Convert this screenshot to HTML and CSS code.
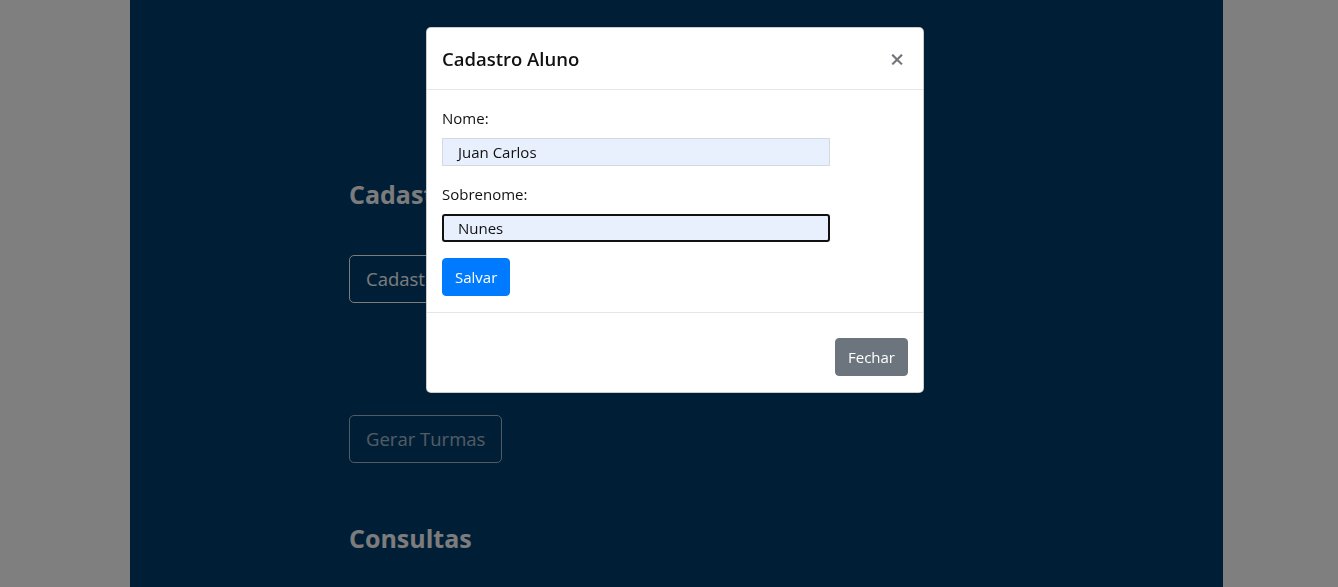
FILE: index.html
```html
<!DOCTYPE html>
<html lang="pt">
<head>
<meta charset="utf-8">
<title>Cadastro Aluno</title>
<link rel="stylesheet" href="styles.css">
</head>
<body>
<div class="page">
  <main class="column">
    <h2 class="section-title first">Cadastros</h2>
    <button class="btn-outline">Cadastrar Aluno</button>
    <button class="btn-outline disabled" disabled>Gerar Turmas</button>
    <h2 class="section-title">Consultas</h2>
  </main>
</div>

<div class="backdrop"></div>

<div class="modal">
  <div class="modal-dialog">
    <div class="modal-header">
      <h5 class="modal-title">Cadastro Aluno</h5>
      <span class="close">&times;</span>
    </div>
    <div class="modal-body">
      <label class="field-label">Nome:</label>
      <div class="input">Juan Carlos</div>
      <label class="field-label">Sobrenome:</label>
      <div class="input focused">Nunes</div>
      <button class="btn btn-primary">Salvar</button>
    </div>
    <div class="modal-footer">
      <button class="btn btn-secondary">Fechar</button>
    </div>
  </div>
</div>
</body>
</html>
```

FILE: styles.css
```css
* { box-sizing: border-box; }
html, body { margin: 0; padding: 0; }
body {
  background: #ffffff;
  font-family: "Open Sans", "Noto Sans", sans-serif;
  color: #212529;
  height: 587px;
  overflow: hidden;
}
.page {
  height: 100%;
  padding-left: 130px;
}
.column {
  width: 1093px;
  height: 100%;
  background: #003e6e;
  padding-left: 219px;
  display: flex;
  flex-direction: column;
  align-items: flex-start;
}
.section-title {
  margin: 0;
  font-size: 25px;
  line-height: 40px;
  font-weight: 700;
  color: #f8f9fa;
}
.section-title.first { margin-top: 174px; }
.btn-outline {
  font-family: inherit;
  font-size: 18.5px;
  line-height: 30px;
  height: 48px;
  padding: 8px 16px;
  border: 1px solid #f8f9fa;
  border-radius: 5px;
  background: transparent;
  color: #f8f9fa;
  margin-top: 41px;
}
.btn-outline.disabled {
  opacity: .65;
  margin-top: 112px;
}
.btn-outline.disabled + .section-title { margin-top: 55px; }

.backdrop {
  position: fixed;
  inset: 0;
  background: rgba(0, 0, 0, .5);
}
.modal {
  position: fixed;
  inset: 0;
}
.modal-dialog {
  margin: 27px 0 0 426px;
  width: 498px;
  background: #fff;
  border: 1px solid rgba(0, 0, 0, .2);
  border-radius: 5px;
}
.modal-header {
  display: flex;
  align-items: center;
  justify-content: space-between;
  padding: 15px;
  border-bottom: 1px solid #e6e6e6;
  height: 62px;
}
.modal-title {
  margin: 0;
  font-size: 18.5px;
  line-height: 30px;
  font-weight: 600;
  color: #111;
}
.close {
  font-size: 24px;
  font-weight: 400;
  line-height: 24px;
  color: #6e7175;
  -webkit-text-stroke: 0.4px #6e7175;
  margin-right: 4px;
}
.modal-body {
  padding: 16px 15px;
  display: flex;
  flex-direction: column;
  align-items: flex-start;
}
.field-label {
  font-size: 15px;
  line-height: 24px;
  margin-bottom: 8px;
  color: #111;
}
.input {
  width: 388px;
  height: 28px;
  background: #e8f0fe;
  border: 1px solid #d3d9e0;
  padding: 0 15px;
  font-size: 15px;
  line-height: 26px;
  color: #111;
  margin-bottom: 16px;
}
.input.focused {
  border: 2px solid #111;
  border-radius: 3px;
  padding: 0 14px;
  line-height: 24px;
}
.btn {
  font-family: inherit;
  font-size: 15px;
  line-height: 24px;
  height: 38px;
  padding: 6px 12px;
  border: 1px solid transparent;
  border-radius: 4px;
  color: #fff;
}
.btn-primary { background: #007bff; border-color: #007bff; }
.btn-secondary { background: #6c757d; border-color: #6c757d; }
.modal-footer {
  display: flex;
  justify-content: flex-end;
  border-top: 1px solid #e6e6e6;
  padding: 25px 15px 16px 15px;
}
```
